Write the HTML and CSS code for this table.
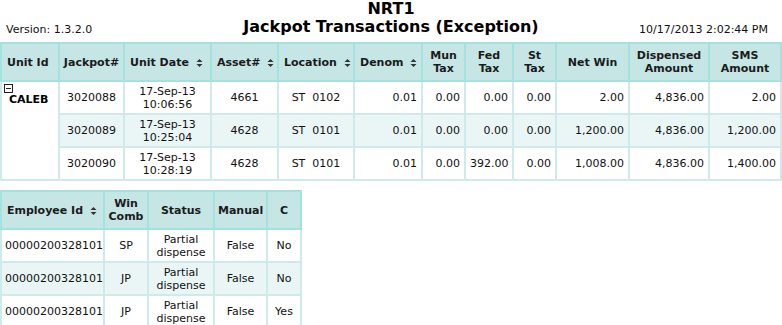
FILE: index.html
```html
<!DOCTYPE html>
<html lang="en">
<head>
    <meta charset="UTF-8">
    <title>Jackpot Transactions (Exception)</title>
    <link rel="stylesheet" href="styles.css">
</head>
<body>
    <header class="top">
        <div class="version">Version: 1.3.2.0</div>
        <div class="title">
            <h1>NRT1</h1>
            <h2>Jackpot Transactions (Exception)</h2>
        </div>
        <div class="stamp">10/17/2013 2:02:44 PM</div>
    </header>

    <table class="grid main">
        <colgroup>
            <col style="width:58px"><col style="width:65px"><col style="width:87px"><col style="width:67px">
            <col style="width:76px"><col style="width:68px"><col style="width:43px"><col style="width:48px">
            <col style="width:43px"><col style="width:73px"><col style="width:80px"><col style="width:72px">
        </colgroup>
        <thead>
            <tr>
                <th class="l">Unit Id</th>
                <th>Jackpot#</th>
                <th class="l">Unit Date <span class="sort"><svg width="7" height="10" viewBox="0 0 7 10"><path d="M3.5 1 L6.5 4 H0.5 Z M3.5 9 L6.5 6 H0.5 Z" fill="#333"/></svg></span></th>
                <th class="l">Asset# <span class="sort"><svg width="7" height="10" viewBox="0 0 7 10"><path d="M3.5 1 L6.5 4 H0.5 Z M3.5 9 L6.5 6 H0.5 Z" fill="#333"/></svg></span></th>
                <th class="l">Location <span class="sort"><svg width="7" height="10" viewBox="0 0 7 10"><path d="M3.5 1 L6.5 4 H0.5 Z M3.5 9 L6.5 6 H0.5 Z" fill="#333"/></svg></span></th>
                <th class="l">Denom <span class="sort"><svg width="7" height="10" viewBox="0 0 7 10"><path d="M3.5 1 L6.5 4 H0.5 Z M3.5 9 L6.5 6 H0.5 Z" fill="#333"/></svg></span></th>
                <th>Mun<br>Tax</th>
                <th>Fed<br>Tax</th>
                <th>St<br>Tax</th>
                <th>Net Win</th>
                <th>Dispensed<br>Amount</th>
                <th>SMS<br>Amount</th>
            </tr>
        </thead>
        <tbody>
            <tr>
                <td rowspan="3" class="unit">
                    <span class="toggle"></span>
                    <b>CALEB</b>
                </td>
                <td class="c">3020088</td>
                <td class="c">17-Sep-13<br>10:06:56</td>
                <td class="c">4661</td>
                <td class="c">ST&nbsp;&nbsp;0102</td>
                <td class="r">0.01</td>
                <td class="r">0.00</td>
                <td class="r">0.00</td>
                <td class="r">0.00</td>
                <td class="r">2.00</td>
                <td class="r">4,836.00</td>
                <td class="r">2.00</td>
            </tr>
            <tr class="alt">
                <td class="c">3020089</td>
                <td class="c">17-Sep-13<br>10:25:04</td>
                <td class="c">4628</td>
                <td class="c">ST&nbsp;&nbsp;0101</td>
                <td class="r">0.01</td>
                <td class="r">0.00</td>
                <td class="r">0.00</td>
                <td class="r">0.00</td>
                <td class="r">1,200.00</td>
                <td class="r">4,836.00</td>
                <td class="r">1,200.00</td>
            </tr>
            <tr>
                <td class="c">3020090</td>
                <td class="c">17-Sep-13<br>10:28:19</td>
                <td class="c">4628</td>
                <td class="c">ST&nbsp;&nbsp;0101</td>
                <td class="r">0.01</td>
                <td class="r">0.00</td>
                <td class="r">392.00</td>
                <td class="r">0.00</td>
                <td class="r">1,008.00</td>
                <td class="r">4,836.00</td>
                <td class="r">1,400.00</td>
            </tr>
        </tbody>
    </table>

    <table class="grid extra">
        <colgroup>
            <col style="width:103px"><col style="width:44px"><col style="width:66px"><col style="width:53px"><col style="width:34px">
        </colgroup>
        <thead>
            <tr>
                <th class="l">Employee Id <span class="sort"><svg width="7" height="10" viewBox="0 0 7 10"><path d="M3.5 1 L6.5 4 H0.5 Z M3.5 9 L6.5 6 H0.5 Z" fill="#333"/></svg></span></th>
                <th>Win<br>Comb</th>
                <th>Status</th>
                <th>Manual</th>
                <th>C</th>
            </tr>
        </thead>
        <tbody>
            <tr>
                <td class="l">00000200328101</td>
                <td class="c">SP</td>
                <td class="c">Partial<br>dispense</td>
                <td class="c">False</td>
                <td class="c">No</td>
            </tr>
            <tr class="alt">
                <td class="l">00000200328101</td>
                <td class="c">JP</td>
                <td class="c">Partial<br>dispense</td>
                <td class="c">False</td>
                <td class="c">No</td>
            </tr>
            <tr>
                <td class="l">00000200328101</td>
                <td class="c">JP</td>
                <td class="c">Partial<br>dispense</td>
                <td class="c">False</td>
                <td class="c">Yes</td>
            </tr>
        </tbody>
    </table>
</body>
</html>
```

FILE: styles.css
```css
/* reset */
body{
    margin: 0;
    font-family: "DejaVu Sans", Verdana, sans-serif;
    font-size: 11px;
    color: #111;
    background: #fff;
}
h1,h2{
    margin: 0;
    font-weight: bold;
    color: #000;
}
/* report header */
.top{
    display: grid;
    grid-template-columns: 1fr auto 1fr;
    align-items: end;
    height: 42px;
    box-sizing: border-box;
    padding-bottom: 6px;
}
.version{
    padding-left: 6px;
}
.stamp{
    text-align: right;
    padding-right: 14px;
}
.title{
    text-align: center;
    line-height: 18px;
}
.title h1{
    font-size: 16px;
}
.title h2{
    font-size: 16px;
}
/* tables */
.grid{
    border-collapse: collapse;
    table-layout: fixed;
}
.main{
    width: 781px;
}
.extra{
    width: 300px;
    margin-top: 9px;
}
.grid th{
    background: #c6e5e5;
    border: 2px solid #a3e2df;
    height: 36px;
    padding: 0 3px;
    font-weight: bold;
    line-height: 13px;
    text-align: center;
    white-space: nowrap;
    color: #1b1b1b;
}
.grid th.l{
    text-align: left;
    padding-left: 5px;
}
.grid td{
    border: 2px solid #cfeaea;
    height: 31px;
    padding: 0 4px;
    line-height: 13px;
    vertical-align: middle;
    white-space: nowrap;
}
.grid .alt td{
    background: #eaf6f6;
}
.grid td.c{ text-align: center; }
.grid td.r{ text-align: right; }
.grid td.l{ text-align: left; padding-left: 3px; }
.sort{
    display: inline-block;
    vertical-align: middle;
    margin-left: 3px;
}
.sort svg{
    display: block;
}
.grid td.unit{
    vertical-align: top;
    background: #fff;
    padding: 2px 0 0 2px;
}
.toggle{
    display: block;
    width: 9px;
    height: 9px;
    box-sizing: border-box;
    border: 1px solid #222;
    position: relative;
}
.toggle::after{
    content: "";
    position: absolute;
    left: 1px;
    right: 1px;
    top: 3px;
    height: 1px;
    background: #222;
}
.unit b{
    display: block;
    padding-left: 5px;
    color: #000;
}
```
